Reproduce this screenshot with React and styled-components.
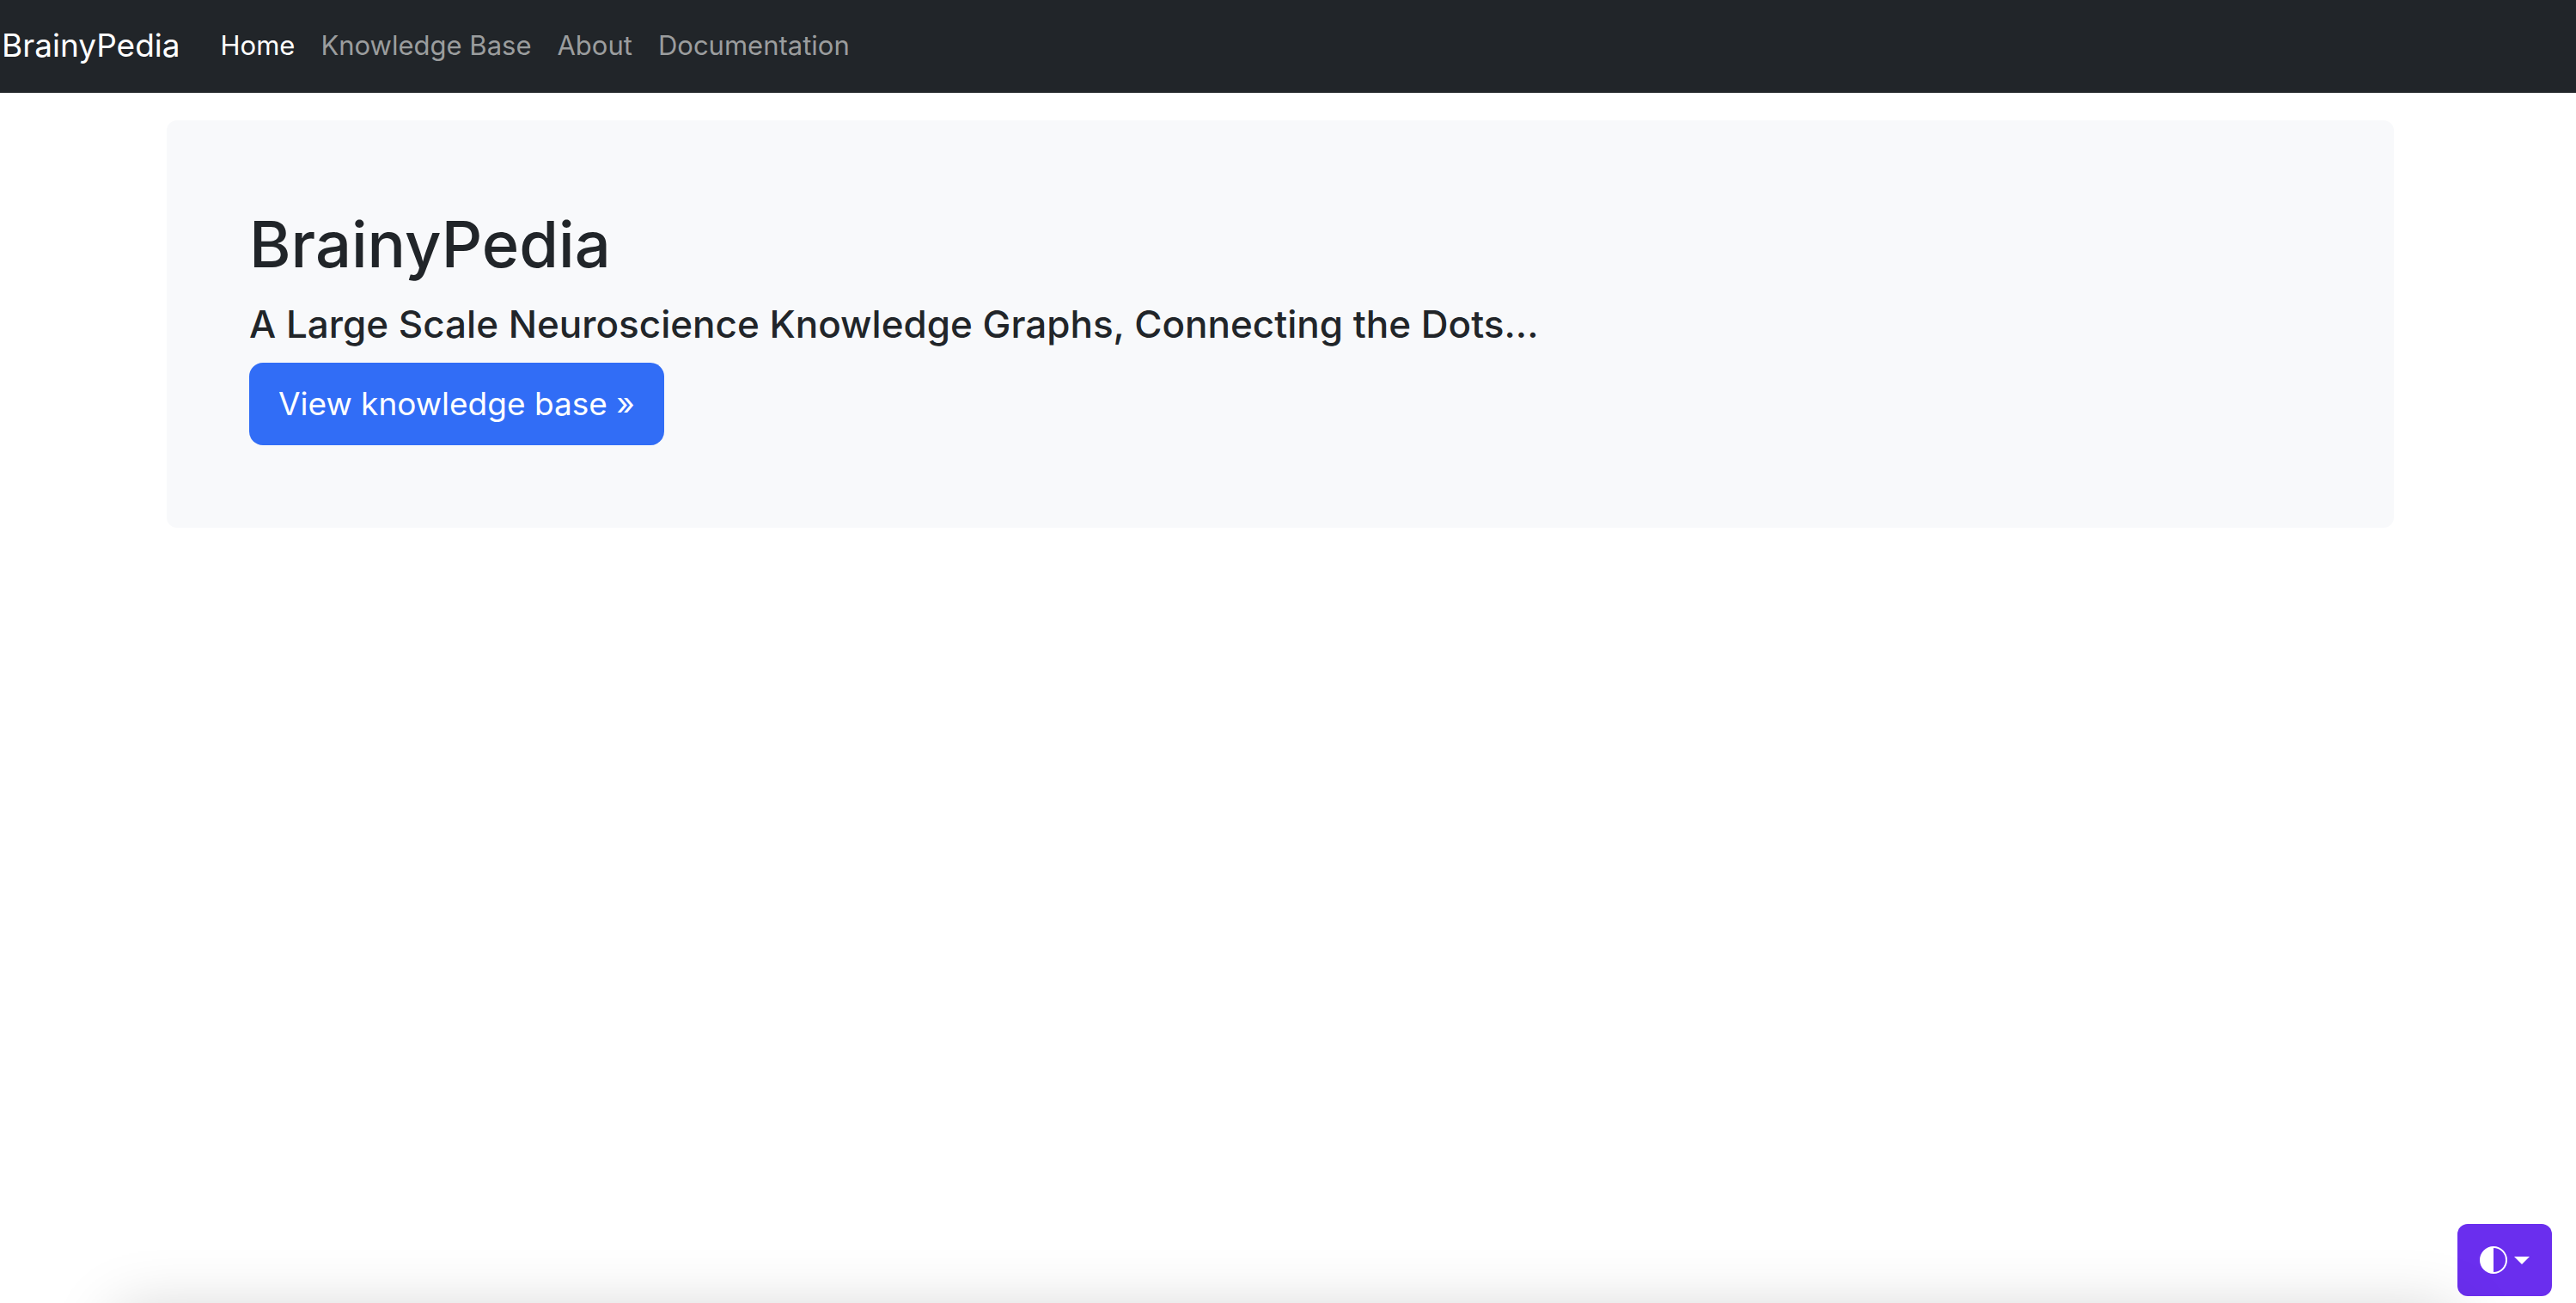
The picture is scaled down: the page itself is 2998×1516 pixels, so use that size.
import React from "react";
import styled, { createGlobalStyle } from "styled-components";

const GlobalStyle = createGlobalStyle`
  *, *::before, *::after { box-sizing: border-box; }
  body {
    margin: 0;
    background: #fff;
    color: #212529;
    font-family: Inter, "Liberation Sans", sans-serif;
    font-size: 31px;
    line-height: 48px;
  }
`;

const Navbar = styled.nav`
  display: flex;
  align-items: center;
  min-height: 108px;
  padding: 0 2px 2px;
  background: #212529;
`;

const Brand = styled.a`
  margin-right: 32px;
  color: #fff;
  font-size: 37px;
  text-decoration: none;
  white-space: nowrap;
`;

const NavList = styled.ul`
  display: flex;
  margin: 0;
  padding: 0;
  list-style: none;
`;

const NavLink = styled.a`
  display: block;
  padding: 0 15px;
  color: ${({ $active }) => ($active ? "#fff" : "#9b9d9e")};
  text-decoration: none;
  white-space: nowrap;
`;

const Main = styled.main`
  margin-right: 18px;
  padding: 32px 24px 0;
`;

const Hero = styled.section`
  max-width: 2592px;
  margin: 0 auto;
  padding: 96px;
  border-radius: 12px;
  background: #f8f9fb;
`;

const Title = styled.h1`
  margin: 0 0 16px;
  font-size: 74px;
  font-weight: 500;
  line-height: 96px;
`;

const Subtitle = styled.h4`
  margin: 0 0 16px;
  font-size: 44px;
  font-weight: 500;
  line-height: 58px;
`;

const PrimaryLink = styled.a`
  display: inline-flex;
  align-items: center;
  height: 96px;
  padding: 0 34px;
  border-radius: 16px;
  background: #316df6;
  color: #fff;
  font-size: 37px;
  text-decoration: none;
  vertical-align: top;
`;

const ThemeButton = styled.button`
  position: fixed;
  right: 28px;
  bottom: 8px;
  display: flex;
  align-items: center;
  gap: 8px;
  height: 84px;
  padding: 0 26px;
  border: 0;
  border-radius: 12px;
  background: #6a2eee;
  color: #fff;
`;

const Caret = styled.span`
  border-top: 9px solid currentColor;
  border-right: 9px solid transparent;
  border-left: 9px solid transparent;
`;

const BottomShade = styled.div`
  position: fixed;
  top: calc(100% + 13px);
  right: 140px;
  left: 136px;
  height: 400px;
  box-shadow: 0 0 72px rgba(0, 0, 0, 0.2);
  pointer-events: none;
`;

const links = ["Home", "Knowledge Base", "About", "Documentation"];

export default function App() {
  return (
    <>
      <GlobalStyle />
      <Navbar>
        <Brand href="#">BrainyPedia</Brand>
        <NavList>
          {links.map((label, i) => (
            <li key={label}>
              <NavLink href="#" $active={i === 0} aria-current={i === 0 ? "page" : undefined}>
                {label}
              </NavLink>
            </li>
          ))}
        </NavList>
      </Navbar>
      <Main>
        <Hero>
          <Title>BrainyPedia</Title>
          <Subtitle>A Large Scale Neuroscience Knowledge Graphs, Connecting the Dots...</Subtitle>
          <PrimaryLink href="#">View knowledge base »</PrimaryLink>
        </Hero>
      </Main>
      <ThemeButton type="button" aria-label="Toggle theme">
        <svg width="32" height="32" viewBox="0 0 16 16" fill="currentColor" aria-hidden="true">
          <path d="M8 15A7 7 0 1 0 8 1v14zm0 1A8 8 0 1 1 8 0a8 8 0 0 1 0 16z" />
        </svg>
        <Caret />
      </ThemeButton>
      <BottomShade />
    </>
  );
}
